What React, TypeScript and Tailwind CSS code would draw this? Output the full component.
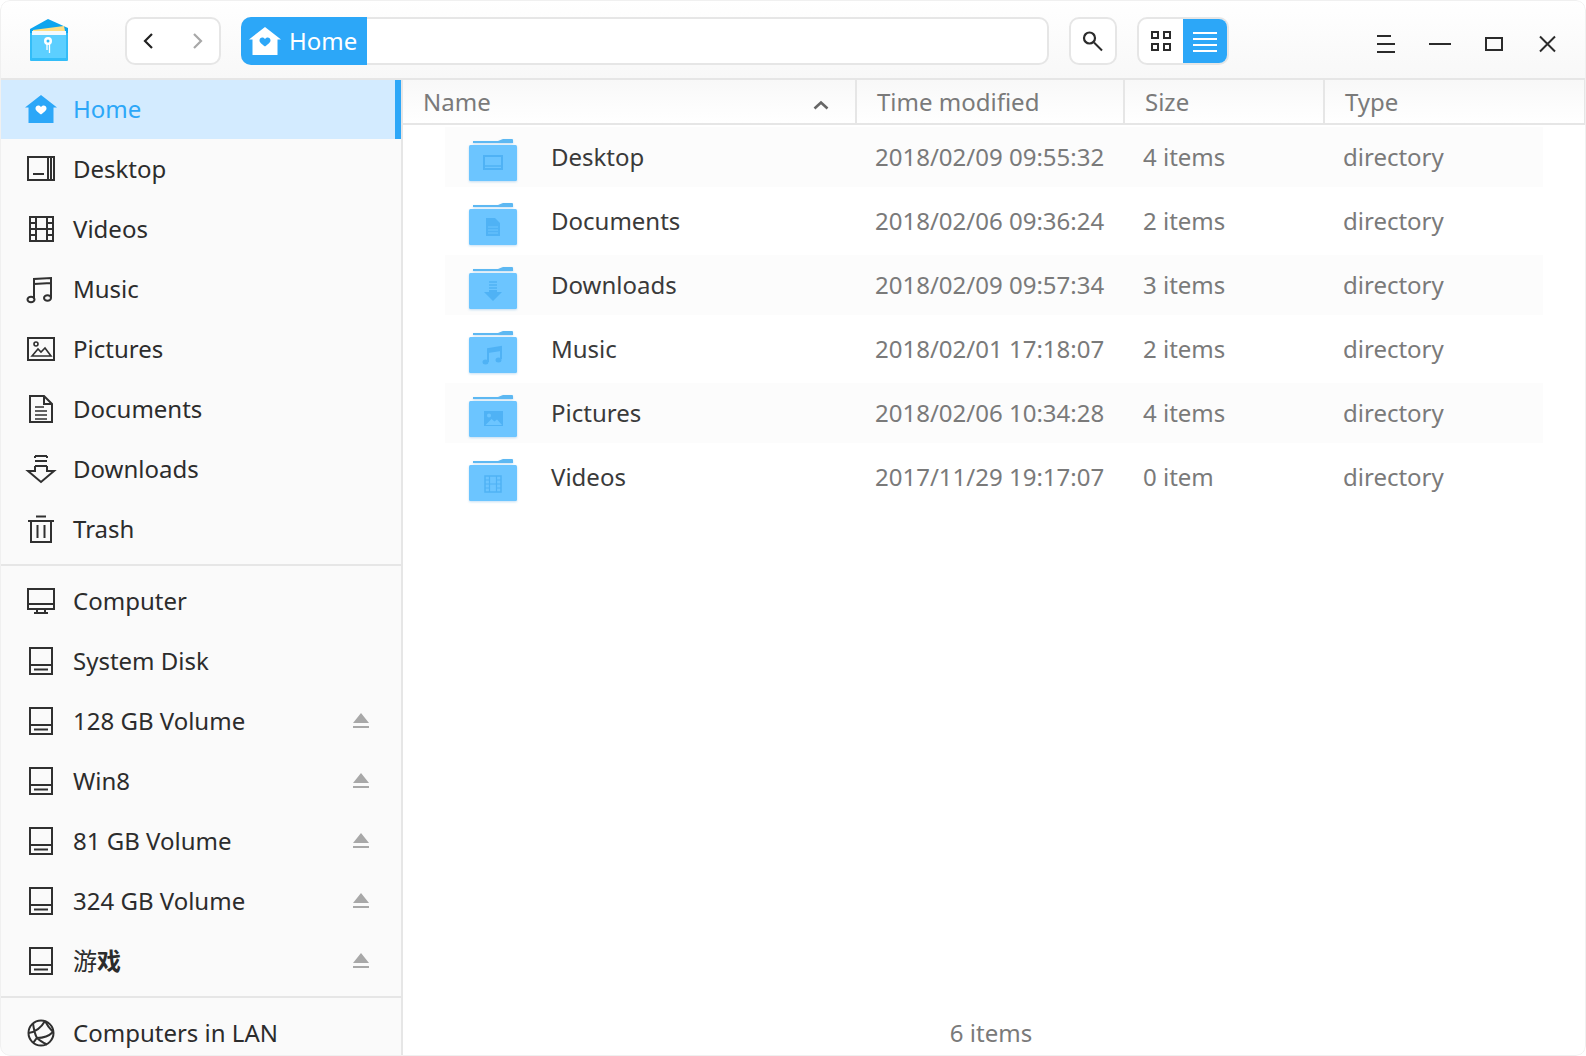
import type { ReactNode } from "react";

const stroke = "#303030";

function Glyph({ children, size = 32 }: { children: ReactNode; size?: number }) {
  return (
    <svg width={size} height={size} viewBox="0 0 32 32" fill="none" stroke={stroke} strokeWidth="2" className="shrink-0">
      {children}
    </svg>
  );
}

const DesktopIcon = () => (
  <Glyph>
    <rect x="3" y="4" width="26" height="23" />
    <path d="M23 4v23M26 4v23M8 21h11" />
  </Glyph>
);
const VideosIcon = () => (
  <Glyph>
    <rect x="5" y="4" width="23" height="24" />
    <path d="M11 4v24M22 4v24M5 10h6M5 16h23M5 22h6M22 10h6M22 22h6" />
  </Glyph>
);
const MusicIcon = () => (
  <Glyph>
    <path d="M9 26V6l17-1v20M9 11l17-1" />
    <ellipse cx="6" cy="26.5" rx="3.5" ry="2.8" />
    <ellipse cx="22.5" cy="25" rx="3.5" ry="2.8" />
  </Glyph>
);
const PicturesIcon = () => (
  <Glyph>
    <rect x="3" y="5" width="26" height="22" />
    <circle cx="11" cy="11" r="2" strokeWidth="1.6" />
    <path d="M7 23l6-7 3 3 4-4 6 8z" strokeWidth="1.6" />
  </Glyph>
);
const DocumentsIcon = () => (
  <Glyph>
    <path d="M5 3h14l8 8v18H5zM19 3v8h8" />
    <path d="M10 14h9M10 18h12M10 22h12M10 26h12" strokeWidth="1.6" />
  </Glyph>
);
const DownloadsIcon = () => (
  <Glyph>
    <path d="M10 3h12M10 8h12M10 13h12M10 3v2M22 3v2" />
    <path d="M10 13v5H3l13 11 13-11h-7v-5" />
  </Glyph>
);
const TrashIcon = () => (
  <Glyph>
    <path d="M3 8h26M11 3.500h10M6 8v21h20V8M12.500 12v13M19.500 12v13" />
  </Glyph>
);
const ComputerIcon = () => (
  <Glyph>
    <rect x="3" y="4" width="26" height="20" />
    <path d="M3 19h26M12 24v3M20 24v3M9 28h14" />
  </Glyph>
);
const DiskIcon = () => (
  <Glyph>
    <rect x="5" y="3" width="22" height="26" />
    <path d="M5 20h22M9 24.500h14" />
  </Glyph>
);
const LanIcon = () => (
  <Glyph>
    <circle cx="16" cy="16" r="12.500" />
    <path d="M8 6.500c1 7 2 11 4 14.500 3 3 7 5 10 6.500M3.500 16C10 15 16 11 20 4M12 21c6 0 12-2 16-6M12 21c-2 2-3 4-4 5M20 4c2 4 5 8 8 11" strokeWidth="2" />
  </Glyph>
);

function HomeIcon({ body, heart }: { body: string; heart: string }) {
  return (
    <svg width="32" height="28" viewBox="0 0 32 28" className="shrink-0">
      <path d="M16 0L32 12.500h-3.500V28h-25V12.500H0z" fill={body} />
      <path d="M16 19.500c-4-2.800-5.500-4.300-5.500-6.200 0-1.700 1.300-2.800 2.800-2.800 1.100 0 2.100.6 2.700 1.600.6-1 1.600-1.600 2.700-1.600 1.500 0 2.800 1.100 2.800 2.800 0 1.900-1.500 3.400-5.500 6.200z" fill={heart} />
    </svg>
  );
}

function Logo() {
  return (
    <svg width="40" height="44" viewBox="0 0 40 44" className="shrink-0">
      <path d="M0 10L18 0l20 9v6H0z" fill="#0ea5ef" />
      <path d="M3 11l31-4 1 5H3z" fill="#ffdf85" />
      <path d="M2 12h34v5H2z" fill="#f2faff" />
      <path d="M0 14h2v25h34V14h2v27a1 1 0 0 1-1 1H1a1 1 0 0 1-1-1z" fill="#33bdf8" />
      <path d="M2 16h34v23H2z" fill="#5ccfff" />
      <circle cx="18" cy="22" r="4" fill="#fff" />
      <circle cx="18" cy="22" r="1.500" fill="#33bdf8" />
      <path d="M17 25v6M19.500 25v9" stroke="#fff" strokeWidth="1.300" />
    </svg>
  );
}

function SearchIcon() {
  return (
    <svg width="24" height="24" viewBox="0 0 24 24" fill="none" stroke="#2b2b2b">
      <circle cx="8.500" cy="9" r="5.500" strokeWidth="2.200" />
      <path d="M13 13.500l8 8" strokeWidth="2" />
    </svg>
  );
}

function FolderIcon({ children }: { children: ReactNode }) {
  return (
    <svg width="48" height="44" viewBox="0 0 48 44" className="mt-1 shrink-0 drop-shadow-[0_1px_1px_rgba(60,150,220,0.3)]">
      <path d="M4 4h25l5-2h9q1 0 1 1v3H4z" fill="#5db8f2" />
      <rect x="0" y="8" width="48" height="36" rx="1.500" fill="#6cc5ff" />
      <g fill="#4fb2f5" stroke="#4fb2f5" transform="translate(0 2)">
        {children}
      </g>
    </svg>
  );
}

const sideTop = [
  { label: "Desktop", icon: <DesktopIcon /> },
  { label: "Videos", icon: <VideosIcon /> },
  { label: "Music", icon: <MusicIcon /> },
  { label: "Pictures", icon: <PicturesIcon /> },
  { label: "Documents", icon: <DocumentsIcon /> },
  { label: "Downloads", icon: <DownloadsIcon /> },
  { label: "Trash", icon: <TrashIcon /> },
];

const disks: { label: ReactNode; eject: boolean }[] = [
  { label: "System Disk", eject: false },
  { label: "128 GB Volume", eject: true },
  { label: "Win8", eject: true },
  { label: "81 GB Volume", eject: true },
  { label: "324 GB Volume", eject: true },
  {
    label: (
      <>
        游<span className="font-bold">戏</span>
      </>
    ),
    eject: true,
  },
];

const files = [
  {
    name: "Desktop",
    time: "2018/02/09 09:55:32",
    size: "4 items",
    glyph: (
      <>
        <rect x="15" y="17" width="18" height="13" fill="none" strokeWidth="2" />
        <path d="M16 27h16" strokeWidth="1.500" />
      </>
    ),
  },
  {
    name: "Documents",
    time: "2018/02/06 09:36:24",
    size: "2 items",
    glyph: (
      <>
        <path d="M17 15h9l5 5v13H17z" strokeWidth="0" />
        <path d="M19 24h10M19 27h10M19 30h10" stroke="#6cc5ff" strokeWidth="1" />
      </>
    ),
  },
  {
    name: "Downloads",
    time: "2018/02/09 09:57:34",
    size: "3 items",
    glyph: (
      <>
        <path d="M20 15h8M20 18h8M20 21h8" strokeWidth="1.500" fill="none" />
        <path d="M20 23h8v2h5l-9 9-9-9h5z" strokeWidth="0" />
      </>
    ),
  },
  {
    name: "Music",
    time: "2018/02/01 17:18:07",
    size: "2 items",
    glyph: (
      <>
        <path d="M19 31V18l13-2v12" fill="none" strokeWidth="2" />
        <path d="M19 18l13-2v4l-13 2z" strokeWidth="0" />
        <ellipse cx="16.500" cy="31" rx="3" ry="2.500" strokeWidth="0" />
        <ellipse cx="29.500" cy="29" rx="3" ry="2.500" strokeWidth="0" />
      </>
    ),
  },
  {
    name: "Pictures",
    time: "2018/02/06 10:34:28",
    size: "4 items",
    glyph: (
      <>
        <rect x="15" y="16" width="19" height="15" strokeWidth="0" />
        <circle cx="20" cy="20.500" r="2" fill="#6cc5ff" strokeWidth="0" />
        <path d="M16.500 30l6-6 3 2.500 2.500-2 5 5.500z" fill="#6cc5ff" strokeWidth="0" />
      </>
    ),
  },
  {
    name: "Videos",
    time: "2017/11/29 19:17:07",
    size: "0 item",
    glyph: (
      <>
        <rect x="16" y="17" width="16" height="16" fill="none" strokeWidth="1.500" />
        <path d="M20.500 17v16M27.500 17v16M16 25h16M16 21h4M16 29h4M28 21h4M28 29h4" fill="none" strokeWidth="1.200" />
      </>
    ),
  },
];

function SideRow({ icon, children, eject }: { icon: ReactNode; children: ReactNode; eject?: boolean }) {
  return (
    <div className="flex h-[60px] shrink-0 items-center gap-4 pl-[25px] pr-[32px] text-[#2c2c2c]">
      {icon}
      <span className="flex-1">{children}</span>
      {eject && (
        <svg width="16" height="16" viewBox="0 0 16 16" fill="#a8a8a8">
          <path d="M8 0l8 10H0zM0 13h16v2H0z" />
        </svg>
      )}
    </div>
  );
}

export default function App() {
  return (
    <div
      className="relative flex h-screen w-screen flex-col overflow-hidden rounded-[10px] bg-white text-[24px]"
      style={{ fontFamily: '"Noto Sans", "Noto Sans CJK SC", sans-serif' }}
    >
      {/* toolbar */}
      <header className="flex h-20 shrink-0 items-center border-b-2 border-[#e6e6e6] bg-gradient-to-b from-white to-[#f8f8f8] pl-[30px] pt-1">
        <Logo />
        <div className="ml-[55px] flex h-12 w-[96px] items-center justify-between rounded-[10px] border-2 border-[#e6e6e6] bg-white pl-[12px] pr-[12px]">
          <svg width="20" height="20" viewBox="0 0 20 20" fill="none" stroke="#222" strokeWidth="2.200">
            <path d="M13 3L6 10l7 7" />
          </svg>
          <svg width="20" height="20" viewBox="0 0 20 20" fill="none" stroke="#a8a8a8" strokeWidth="2.200">
            <path d="M7 3l7 7-7 7" />
          </svg>
        </div>
        <div className="ml-5 flex h-12 w-[808px] rounded-[10px] border-2 border-[#e6e6e6] bg-white">
          <div className="-m-[2px] flex h-12 w-[126px] items-center gap-2 rounded-l-[10px] bg-[#2ca7f8] pl-2 text-white">
            <HomeIcon body="#ffffff" heart="#2ca7f8" />
            <span>Home</span>
          </div>
        </div>
        <button className="ml-5 flex h-12 w-12 items-center justify-center rounded-[10px] border-2 border-[#e6e6e6] bg-white">
          <SearchIcon />
        </button>
        <div className="ml-5 flex h-12 w-[92px] overflow-hidden rounded-[10px] border-2 border-[#e6e6e6] bg-white">
          <div className="flex w-[44px] items-center justify-center">
            <svg width="22" height="22" viewBox="0 0 22 22" fill="none" stroke="#2b2b2b" strokeWidth="2">
              <rect x="2" y="2" width="6" height="6" />
              <rect x="14" y="2" width="6" height="6" />
              <rect x="2" y="14" width="6" height="6" />
              <rect x="14" y="14" width="6" height="6" />
            </svg>
          </div>
          <div className="flex flex-1 items-center justify-center bg-[#2ca7f8]">
            <svg width="24" height="22" viewBox="0 0 24 22" stroke="#fff" strokeWidth="2">
              <path d="M0 3h24M0 9h24M0 15h24M0 21h24" />
            </svg>
          </div>
        </div>
        <div className="ml-auto mt-[6px] flex items-center gap-[34px] pr-[29px]">
          <svg width="20" height="20" viewBox="0 0 20 20" stroke="#2b2b2b" strokeWidth="2">
            <path d="M2 2h14M2 10h18M2 18h18" />
          </svg>
          <svg width="22" height="20" viewBox="0 0 22 20" stroke="#2b2b2b" strokeWidth="2" className="-mr-[2px]">
            <path d="M0 10h22" />
          </svg>
          <svg width="20" height="20" viewBox="0 0 20 20" fill="none" stroke="#2b2b2b" strokeWidth="2">
            <rect x="3" y="4" width="16" height="12" />
          </svg>
          <svg width="20" height="20" viewBox="0 0 20 20" fill="none" stroke="#2b2b2b" strokeWidth="2">
            <path d="M3 2.500l15 15M18 2.500L3 17.500" />
          </svg>
        </div>
      </header>

      <div className="flex min-h-0 flex-1">
        {/* sidebar */}
        <aside className="flex w-[403px] shrink-0 flex-col overflow-hidden border-r-2 border-[#e6e6e6] bg-[#fafafa]">
          <div className="flex h-[59px] shrink-0 items-center gap-4 border-r-[6px] border-[#2ca7f8] bg-[#d3ebff] pb-[2px] pl-[25px] text-[#2ca7f8]">
            <HomeIcon body="#2ca7f8" heart="#ffffff" />
            <span>Home</span>
          </div>
          {sideTop.map((item) => (
            <SideRow key={item.label} icon={item.icon}>
              {item.label}
            </SideRow>
          ))}
          <div className="mb-[5px] mt-[5px] h-[2px] shrink-0 bg-[#e6e6e6]" />
          <SideRow icon={<ComputerIcon />}>Computer</SideRow>
          {disks.map((disk, i) => (
            <SideRow key={i} icon={<DiskIcon />} eject={disk.eject}>
              {disk.label}
            </SideRow>
          ))}
          <div className="mb-[5px] mt-[5px] h-[2px] shrink-0 bg-[#e6e6e6]" />
          <SideRow icon={<LanIcon />}>Computers in LAN</SideRow>
        </aside>

        {/* file list */}
        <main className="flex min-w-0 flex-1 flex-col">
          <div className="grid h-[45px] shrink-0 grid-cols-[452px_268px_200px_1fr] border-b-2 border-[#e6e6e6] bg-gradient-to-b from-[#f8f8f8] to-white text-[#7a7a7a]">
            <div className="flex items-center justify-between pl-[20px] pr-[26px]">
              <span>Name</span>
              <svg width="16" height="10" viewBox="0 0 16 10" fill="none" stroke="#666" strokeWidth="2.600" className="mt-[6px]">
                <path d="M1.500 8.500L8 2.500l6.500 6" />
              </svg>
            </div>
            <div className="flex items-center border-l-2 border-[#e6e6e6] pl-5">Time modified</div>
            <div className="flex items-center border-l-2 border-[#e6e6e6] pl-5">Size</div>
            <div className="flex items-center border-x-2 border-[#e6e6e6] pl-5">Type</div>
          </div>
          <div className="ml-[42px] mr-[43px] mt-[2px] flex flex-col gap-1">
            {files.map((file, i) => (
              <div
                key={file.name}
                className={
                  "grid h-[60px] grid-cols-[430px_268px_200px_1fr] items-center text-[#7a7a7a] " +
                  (i % 2 === 0 ? "bg-[#fcfcfc]" : "")
                }
              >
                <div className="flex items-center gap-[34px] pl-6 text-[#3a3a3a]">
                  <FolderIcon>{file.glyph}</FolderIcon>
                  <span>{file.name}</span>
                </div>
                <div>{file.time}</div>
                <div>{file.size}</div>
                <div>directory</div>
              </div>
            ))}
          </div>
          <div className="mt-auto flex h-[46px] items-start justify-center pr-[7px] pt-[5px] text-[#7a7a7a]">6 items</div>
        </main>
      </div>

      {/* window outline */}
      <div className="pointer-events-none absolute inset-0 rounded-[10px] border border-[#f0f0f0]" />
    </div>
  );
}
